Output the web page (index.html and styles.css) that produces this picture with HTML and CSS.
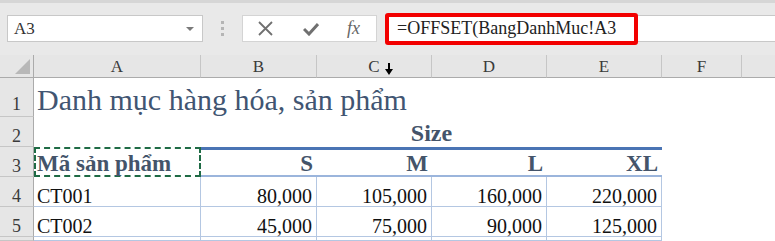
FILE: index.html
```html
<!DOCTYPE html>
<html lang="vi">
<head>
    <meta charset="UTF-8">
    <title>Danh mục hàng hóa</title>
    <link rel="stylesheet" href="styles.css">
</head>
<body>
    <div class="toolbar">
        <div class="name-box">
            <span>A3</span>
            <span class="caret"></span>
        </div>
        <div class="grip"><span></span><span></span><span></span></div>
        <div class="actions">
            <svg class="icon-x" width="15" height="15" viewBox="0 0 15 15">
                <path d="M1 1 L14 14 M14 1 L1 14" stroke="#707070" stroke-width="1.8" fill="none"/>
            </svg>
            <svg class="icon-ok" width="16" height="14" viewBox="0 0 16 14">
                <path d="M1 7 L6 12 L15 2" stroke="#707070" stroke-width="3" fill="none"/>
            </svg>
            <span class="fx">fx</span>
        </div>
        <div class="formula-bar">
            <div class="formula">=OFFSET(BangDanhMuc!A3</div>
        </div>
    </div>

    <div class="sheet">
        <!-- tiêu đề cột -->
        <div class="cell corner"><span class="tri"></span></div>
        <div class="cell ch">A</div>
        <div class="cell ch">B</div>
        <div class="cell ch">C
            <svg class="cursor" width="8" height="12" viewBox="0 0 8 12">
                <path d="M3 0 H5 V6 H8 L4 12 L0 6 H3 Z" fill="#000"/>
            </svg>
        </div>
        <div class="cell ch">D</div>
        <div class="cell ch">E</div>
        <div class="cell ch">F</div>
        <div class="cell ch last"></div>

        <div class="cell rh r1">1</div>
        <div class="cell title">Danh mục hàng hóa, sản phẩm</div>

        <div class="cell rh">2</div>
        <div class="cell"></div>
        <div class="cell size">Size</div>
        <div class="cell"></div>
        <div class="cell"></div>

        <div class="cell rh">3</div>
        <div class="cell code-head">Mã sản phẩm</div>
        <div class="cell head">S</div>
        <div class="cell head">M</div>
        <div class="cell head">L</div>
        <div class="cell head">XL</div>
        <div class="cell"></div>
        <div class="cell"></div>

        <div class="cell rh">4</div>
        <div class="cell code">CT001</div>
        <div class="cell num">80,000</div>
        <div class="cell num">105,000</div>
        <div class="cell num">160,000</div>
        <div class="cell num">220,000</div>
        <div class="cell"></div>
        <div class="cell"></div>

        <div class="cell rh">5</div>
        <div class="cell code">CT002</div>
        <div class="cell num">45,000</div>
        <div class="cell num">75,000</div>
        <div class="cell num">90,000</div>
        <div class="cell num">125,000</div>
        <div class="cell"></div>
        <div class="cell"></div>

        <!-- hàng 6 chỉ thấy mép trên -->
        <div class="cell rh"></div>
        <div class="cell code"></div>
        <div class="cell num"></div>
        <div class="cell num"></div>
        <div class="cell num"></div>
        <div class="cell num"></div>
        <div class="cell"></div>
        <div class="cell"></div>
    </div>
</body>
</html>
```

FILE: styles.css
```css
* {
    box-sizing: border-box;
}
body {
    margin: 0;
    width: 775px;
    height: 241px;
    overflow: hidden;
    background: #fff;
    font-family: "Liberation Serif", "Times New Roman", serif;
}

/* thanh công thức */
.toolbar {
    display: flex;
    align-items: center;
    height: 55px;
    padding: 12px 0 13px 7px;
    border-top: 3px solid #d6d6d6;
    background: #e9e9e9;
}
.name-box {
    display: flex;
    align-items: center;
    justify-content: space-between;
    width: 196px;
    height: 27px;
    padding: 0 8px 0 6px;
    background: #fff;
    border: 1px solid #c8c8c8;
    font-size: 17px;
    color: #333;
}
.caret {
    width: 0;
    height: 0;
    border-left: 4px solid transparent;
    border-right: 4px solid transparent;
    border-top: 4px solid #7a7a7a;
}
.grip {
    display: flex;
    flex-direction: column;
    gap: 3px;
    margin: 0 18px;
}
.grip span {
    width: 3px;
    height: 3px;
    background: #b5b5b5;
}
.actions {
    display: flex;
    align-items: center;
    width: 135px;
    height: 27px;
    padding-left: 15px;
    background: #fff;
    border: 1px solid #d4d4d4;
}
.icon-ok {
    margin-left: 30px;
}
.fx {
    margin-left: 28px;
    font-size: 18px;
    font-style: italic;
    color: #666;
}
.formula-bar {
    display: flex;
    align-items: center;
    flex: 1;
    height: 27px;
    margin-left: 8px;
    background: #fff;
    border-top: 1px solid #c8c8c8;
    border-bottom: 1px solid #c8c8c8;
}
.formula {
    display: flex;
    align-items: center;
    width: 253px;
    height: 32px;
    padding-left: 8px;
    border: 4px solid #f20000;
    border-radius: 3px;
    font-size: 18px;
    color: #222;
    white-space: nowrap;
}

/* bảng tính */
.sheet {
    display: grid;
    grid-template-columns: 34px 167px 116px 115px 115px 115px 80px 1fr;
    grid-template-rows: 23px 39px 30px 30px 30px 30px 4px;
}
.cell {
    display: flex;
    align-items: flex-end;
    min-width: 0;
    line-height: 1;
    white-space: nowrap;
}
.corner {
    justify-content: flex-end;
    padding: 0 3px 3px 0;
    background: #e6e6e6;
    border-right: 1px solid #ababab;
    border-bottom: 1px solid #ababab;
}
.tri {
    width: 0;
    height: 0;
    border-left: 15px solid transparent;
    border-bottom: 15px solid #b8b8b8;
}
.ch {
    position: relative;
    justify-content: center;
    padding-bottom: 2px;
    background: #e6e6e6;
    border-right: 1px solid #c6c6c6;
    border-bottom: 1px solid #ababab;
    font-size: 17px;
    color: #3a3a3a;
}
.ch.last {
    border-right: none;
}
.cursor {
    position: absolute;
    left: 68px;
    top: 8px;
}
.rh {
    justify-content: center;
    padding-bottom: 1px;
    background: #e6e6e6;
    border-right: 1px solid #ababab;
    border-bottom: 1px solid #c6c6c6;
    font-size: 18px;
    color: #3a3a3a;
}
.rh.r1 {
    padding-bottom: 3px;
}
.title {
    grid-column: span 7;
    padding: 0 0 2px 3px;
    font-size: 30px;
    color: #415572;
}
.size {
    grid-column: span 4;
    justify-content: center;
    padding-bottom: 2px;
    font-size: 24px;
    font-weight: bold;
    color: #44546a;
}
.code-head {
    padding-left: 1px;
    border: 2px dashed #1f6b45;
    font-size: 23px;
    font-weight: bold;
    color: #44546a;
}
.head {
    justify-content: flex-end;
    padding-right: 4px;
    border-top: 3px solid #4a74b4;
    border-bottom: 2px solid #9bb5dc;
    font-size: 23px;
    font-weight: bold;
    color: #44546a;
}
.code,
.num {
    font-size: 20px;
    color: #111;
    border-right: 1px solid #b4c7e2;
    border-bottom: 1px solid #b4c7e2;
}
.code {
    padding-left: 3px;
}
.num {
    justify-content: flex-end;
    padding-right: 4px;
}
```
